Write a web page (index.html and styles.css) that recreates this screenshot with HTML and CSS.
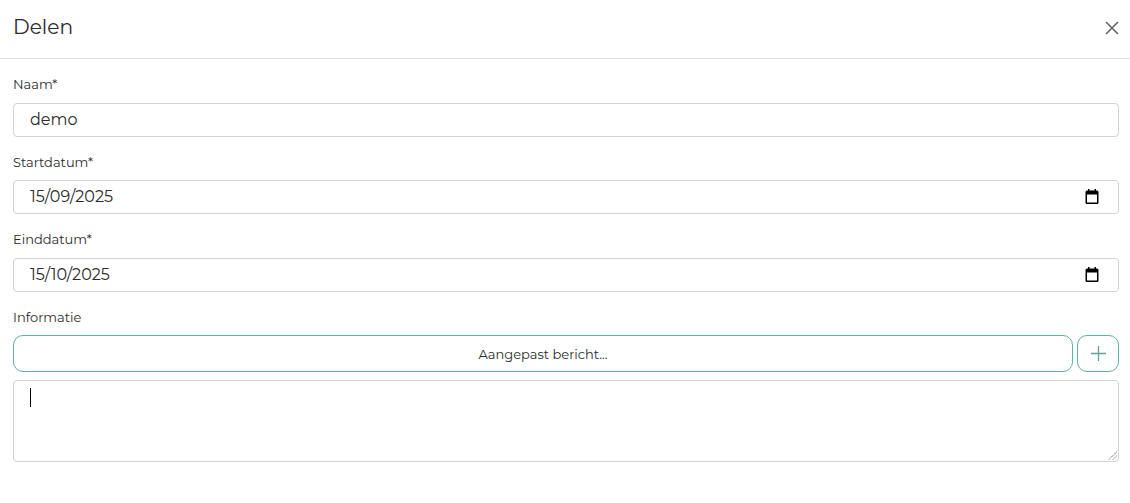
FILE: index.html
```html
<!DOCTYPE html>
<html lang="nl">
<head>
    <meta charset="UTF-8">
    <title>Delen</title>
    <link rel="stylesheet" href="styles.css">
</head>
<body>
    <div class="modal-header">
        <h2 class="modal-title">Delen</h2>
        <button class="close-button" aria-label="Sluiten">
            <svg width="14" height="14" viewBox="0 0 14 14"><path d="M1 1L13 13M13 1L1 13" stroke="#666" stroke-width="1.6" fill="none"/></svg>
        </button>
    </div>
    <div class="modal-body">
        <div class="field">
            <div class="field-label">Naam*</div>
            <div class="field-input field-name">demo</div>
        </div>
        <div class="field">
            <div class="field-label">Startdatum*</div>
            <div class="field-input">
                <span>15/09/2025</span>
                <svg class="calendar-icon" width="14" height="15" viewBox="0 0 14 15"><path d="M0.5 3A1.5 1.5 0 0 1 2 1.5H3V0H4.5V1.5H9.5V0H11V1.5H12A1.5 1.5 0 0 1 13.5 3V13.5A1.5 1.5 0 0 1 12 15H2A1.5 1.5 0 0 1 0.5 13.5ZM2 5.5V13.5H12V5.5Z" fill="#000"/></svg>
            </div>
        </div>
        <div class="field">
            <div class="field-label">Einddatum*</div>
            <div class="field-input">
                <span>15/10/2025</span>
                <svg class="calendar-icon" width="14" height="15" viewBox="0 0 14 15"><path d="M0.5 3A1.5 1.5 0 0 1 2 1.5H3V0H4.5V1.5H9.5V0H11V1.5H12A1.5 1.5 0 0 1 13.5 3V13.5A1.5 1.5 0 0 1 12 15H2A1.5 1.5 0 0 1 0.5 13.5ZM2 5.5V13.5H12V5.5Z" fill="#000"/></svg>
            </div>
        </div>
        <div class="field">
            <div class="field-label">Informatie</div>
            <div class="template-row">
                <button class="template-select">Aangepast bericht...</button>
                <button class="add-button" aria-label="Toevoegen">
                    <svg width="15" height="15" viewBox="0 0 15 15"><path d="M7.5 0V15M0 7.5H15" stroke="#5fa39b" stroke-width="1.3" fill="none"/></svg>
                </button>
            </div>
            <div class="message-box">
                <span class="caret"></span>
                <svg class="resize-grip" width="9" height="9" viewBox="0 0 9 9"><path d="M8.5 1L1 8.5M8.5 5L5 8.5" stroke="#333" stroke-width="1" stroke-dasharray="1 1" fill="none"/></svg>
            </div>
        </div>
    </div>
</body>
</html>
```

FILE: styles.css
```css
* {
    margin: 0;
    padding: 0;
    box-sizing: border-box;
}

body {
    font-family: Montserrat, Inter, "Noto Sans", sans-serif;
    background: #fff;
    color: #2b2b2b;
}

.modal-header {
    height: 59px;
    padding: 0 11px 3px 13px;
    display: flex;
    align-items: center;
    justify-content: space-between;
    border-bottom: 1px solid #dee2e6;
}

.modal-title {
    font-size: 20.2px;
    font-weight: 400;
    margin-bottom: 2px;
}

.close-button {
    background: none;
    border: none;
    width: 14px;
    height: 14px;
    display: flex;
}

.modal-body {
    padding: 17px 11px 0 13px;
}

.field {
    margin-bottom: 16.61px;
}

.field-label {
    font-size: 13px;
    line-height: 17px;
    margin-bottom: 9.9px;
}

.field-input {
    height: 34px;
    border: 1px solid #ced4da;
    border-radius: 4px;
    padding: 0 19px 1px 16px;
    display: flex;
    align-items: center;
    justify-content: space-between;
    font-size: 16px;
}

.template-row {
    display: flex;
    gap: 4px;
    margin-bottom: 8px;
}

.template-select {
    flex: 1;
    height: 37px;
    background: #fff;
    border: 1px solid #5fb0a5;
    border-radius: 10px;
    font: inherit;
    font-size: 13px;
    color: #2b2b2b;
}

.add-button {
    width: 42px;
    height: 37px;
    background: #fff;
    border: 1px solid #5fb0a5;
    border-radius: 10px;
    display: flex;
    align-items: center;
    justify-content: center;
}

.message-box {
    height: 82px;
    border: 1px solid #ced4da;
    border-radius: 4px;
    position: relative;
}

.caret {
    position: absolute;
    left: 16px;
    top: 7px;
    width: 1px;
    height: 19px;
    background: #000;
}

.resize-grip {
    position: absolute;
    right: 1px;
    bottom: 1px;
}
```
